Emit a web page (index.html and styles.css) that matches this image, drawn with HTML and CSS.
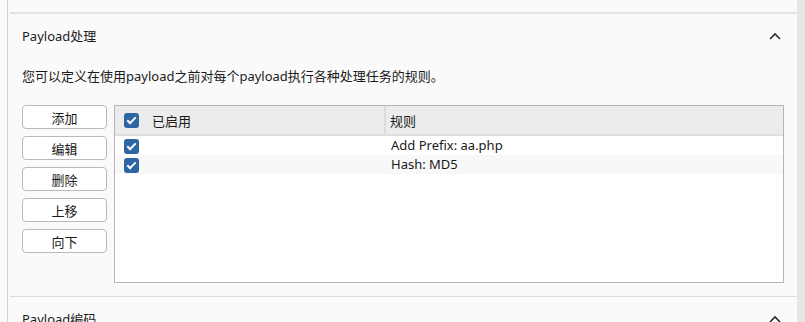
FILE: index.html
```html
<!DOCTYPE html>
<html lang="zh-CN">
<head>
    <meta charset="UTF-8">
    <title>Payload处理</title>
    <link rel="stylesheet" href="styles.css">
</head>
<body>
    <div class="window">
        <div class="main">
            <div class="prev-tail"></div>

            <div class="section">
                <div class="section-head">
                    <span class="section-title">Payload处理</span>
                    <svg class="chevron" width="12" height="8" viewBox="0 0 12 8"><path d="M1 7 L6 2 L11 7" fill="none" stroke="#2b2b2b" stroke-width="1.6"/></svg>
                </div>
                <div class="section-desc">您可以定义在使用payload之前对每个payload执行各种处理任务的规则。</div>

                <div class="editor">
                    <div class="buttons">
                        <button>添加</button>
                        <button>编辑</button>
                        <button>删除</button>
                        <button>上移</button>
                        <button>向下</button>
                    </div>
                    <div class="table-box">
                        <table class="rules">
                            <colgroup>
                                <col class="col-enabled">
                                <col>
                            </colgroup>
                            <thead>
                                <tr>
                                    <th><span class="check"></span><span class="th-label">已启用</span></th>
                                    <th class="th-rule">规则</th>
                                </tr>
                            </thead>
                            <tbody>
                                <tr>
                                    <td><span class="check"></span></td>
                                    <td class="rule">Add Prefix: aa.php</td>
                                </tr>
                                <tr class="alt">
                                    <td><span class="check"></span></td>
                                    <td class="rule">Hash: MD5</td>
                                </tr>
                            </tbody>
                        </table>
                    </div>
                </div>
            </div>

            <div class="section next">
                <div class="section-head">
                    <span class="section-title">Payload编码</span>
                    <svg class="chevron" width="12" height="8" viewBox="0 0 12 8"><path d="M1 7 L6 2 L11 7" fill="none" stroke="#2b2b2b" stroke-width="1.6"/></svg>
                </div>
            </div>
        </div>
        <div class="scrollbar"></div>
    </div>
</body>
</html>
```

FILE: styles.css
```css
body {
    margin: 0;
    background-color: #fafafa;
    font-family: "Noto Sans", "Noto Sans CJK SC", sans-serif;
    font-size: 13px;
    color: #1a1a1a;
}
.window {
    display: flex;
    height: 322px;
    overflow: hidden;
}
.main {
    flex: 1;
    margin-left: 7px;
    border-left: 1px solid #d2d2d2;
}
.scrollbar {
    width: 8px;
    background-color: #e6e6e6;
}
.prev-tail {
    height: 12px;
}
.section {
    margin-left: 2px;
    border-top: 2px solid #e2e2e2;
    padding-left: 12px;
}
.section.next {
    border-top-width: 1px;
    border-top-color: #dcdcdc;
}
.section-head {
    display: flex;
    align-items: center;
    justify-content: space-between;
    height: 44px;
    padding-right: 16px;
}
.section-title {
    line-height: 18px;
}
.chevron {
    display: block;
}
.section-desc {
    line-height: 18px;
    margin-top: 9px;
    margin-bottom: 20px;
}
.editor {
    display: flex;
    gap: 7px;
    margin-right: 13px;
    margin-bottom: 13px;
}
.buttons {
    display: flex;
    flex-direction: column;
    gap: 7px;
}
button {
    width: 85px;
    height: 24px;
    padding: 0;
    font-family: inherit;
    font-size: 13px;
    color: #1a1a1a;
    background-color: #fff;
    border: 1px solid #bdb8b8;
    border-radius: 4px;
}
.table-box {
    flex: 1;
    height: 176px;
    background-color: #fff;
    border: 1px solid #b9b5b5;
}
.rules {
    width: 100%;
    border-collapse: collapse;
    table-layout: fixed;
}
.col-enabled {
    width: 270px;
}
.rules th {
    height: 28px;
    padding: 0;
    font-weight: normal;
    text-align: left;
    background-color: #ececec;
    border-bottom: 2px solid #dfdfdf;
}
.rules th:first-child {
    padding-left: 9px;
}
.rules th .check {
    vertical-align: middle;
}
.th-label {
    margin-left: 13px;
    vertical-align: middle;
}
.th-rule {
    border-left: 2px solid #dcdcdc;
}
.rules th.th-rule {
    padding-left: 4px;
}
.rules td {
    height: 19px;
    padding: 0;
    line-height: 19px;
}
.rules td:first-child {
    padding-left: 9px;
}
.rules td .check {
    vertical-align: middle;
}
.rules td.rule {
    padding-left: 6px;
}
.rules tr.alt td {
    background-color: #f8f8f8;
}
.check {
    display: inline-block;
    width: 15px;
    height: 15px;
    border-radius: 3px;
    background-color: #2c66a3;
    position: relative;
}
.check::after {
    content: "";
    position: absolute;
    left: 5px;
    top: 2px;
    width: 3px;
    height: 7px;
    border-right: 2px solid #fff;
    border-bottom: 2px solid #fff;
    transform: rotate(45deg);
}
```
